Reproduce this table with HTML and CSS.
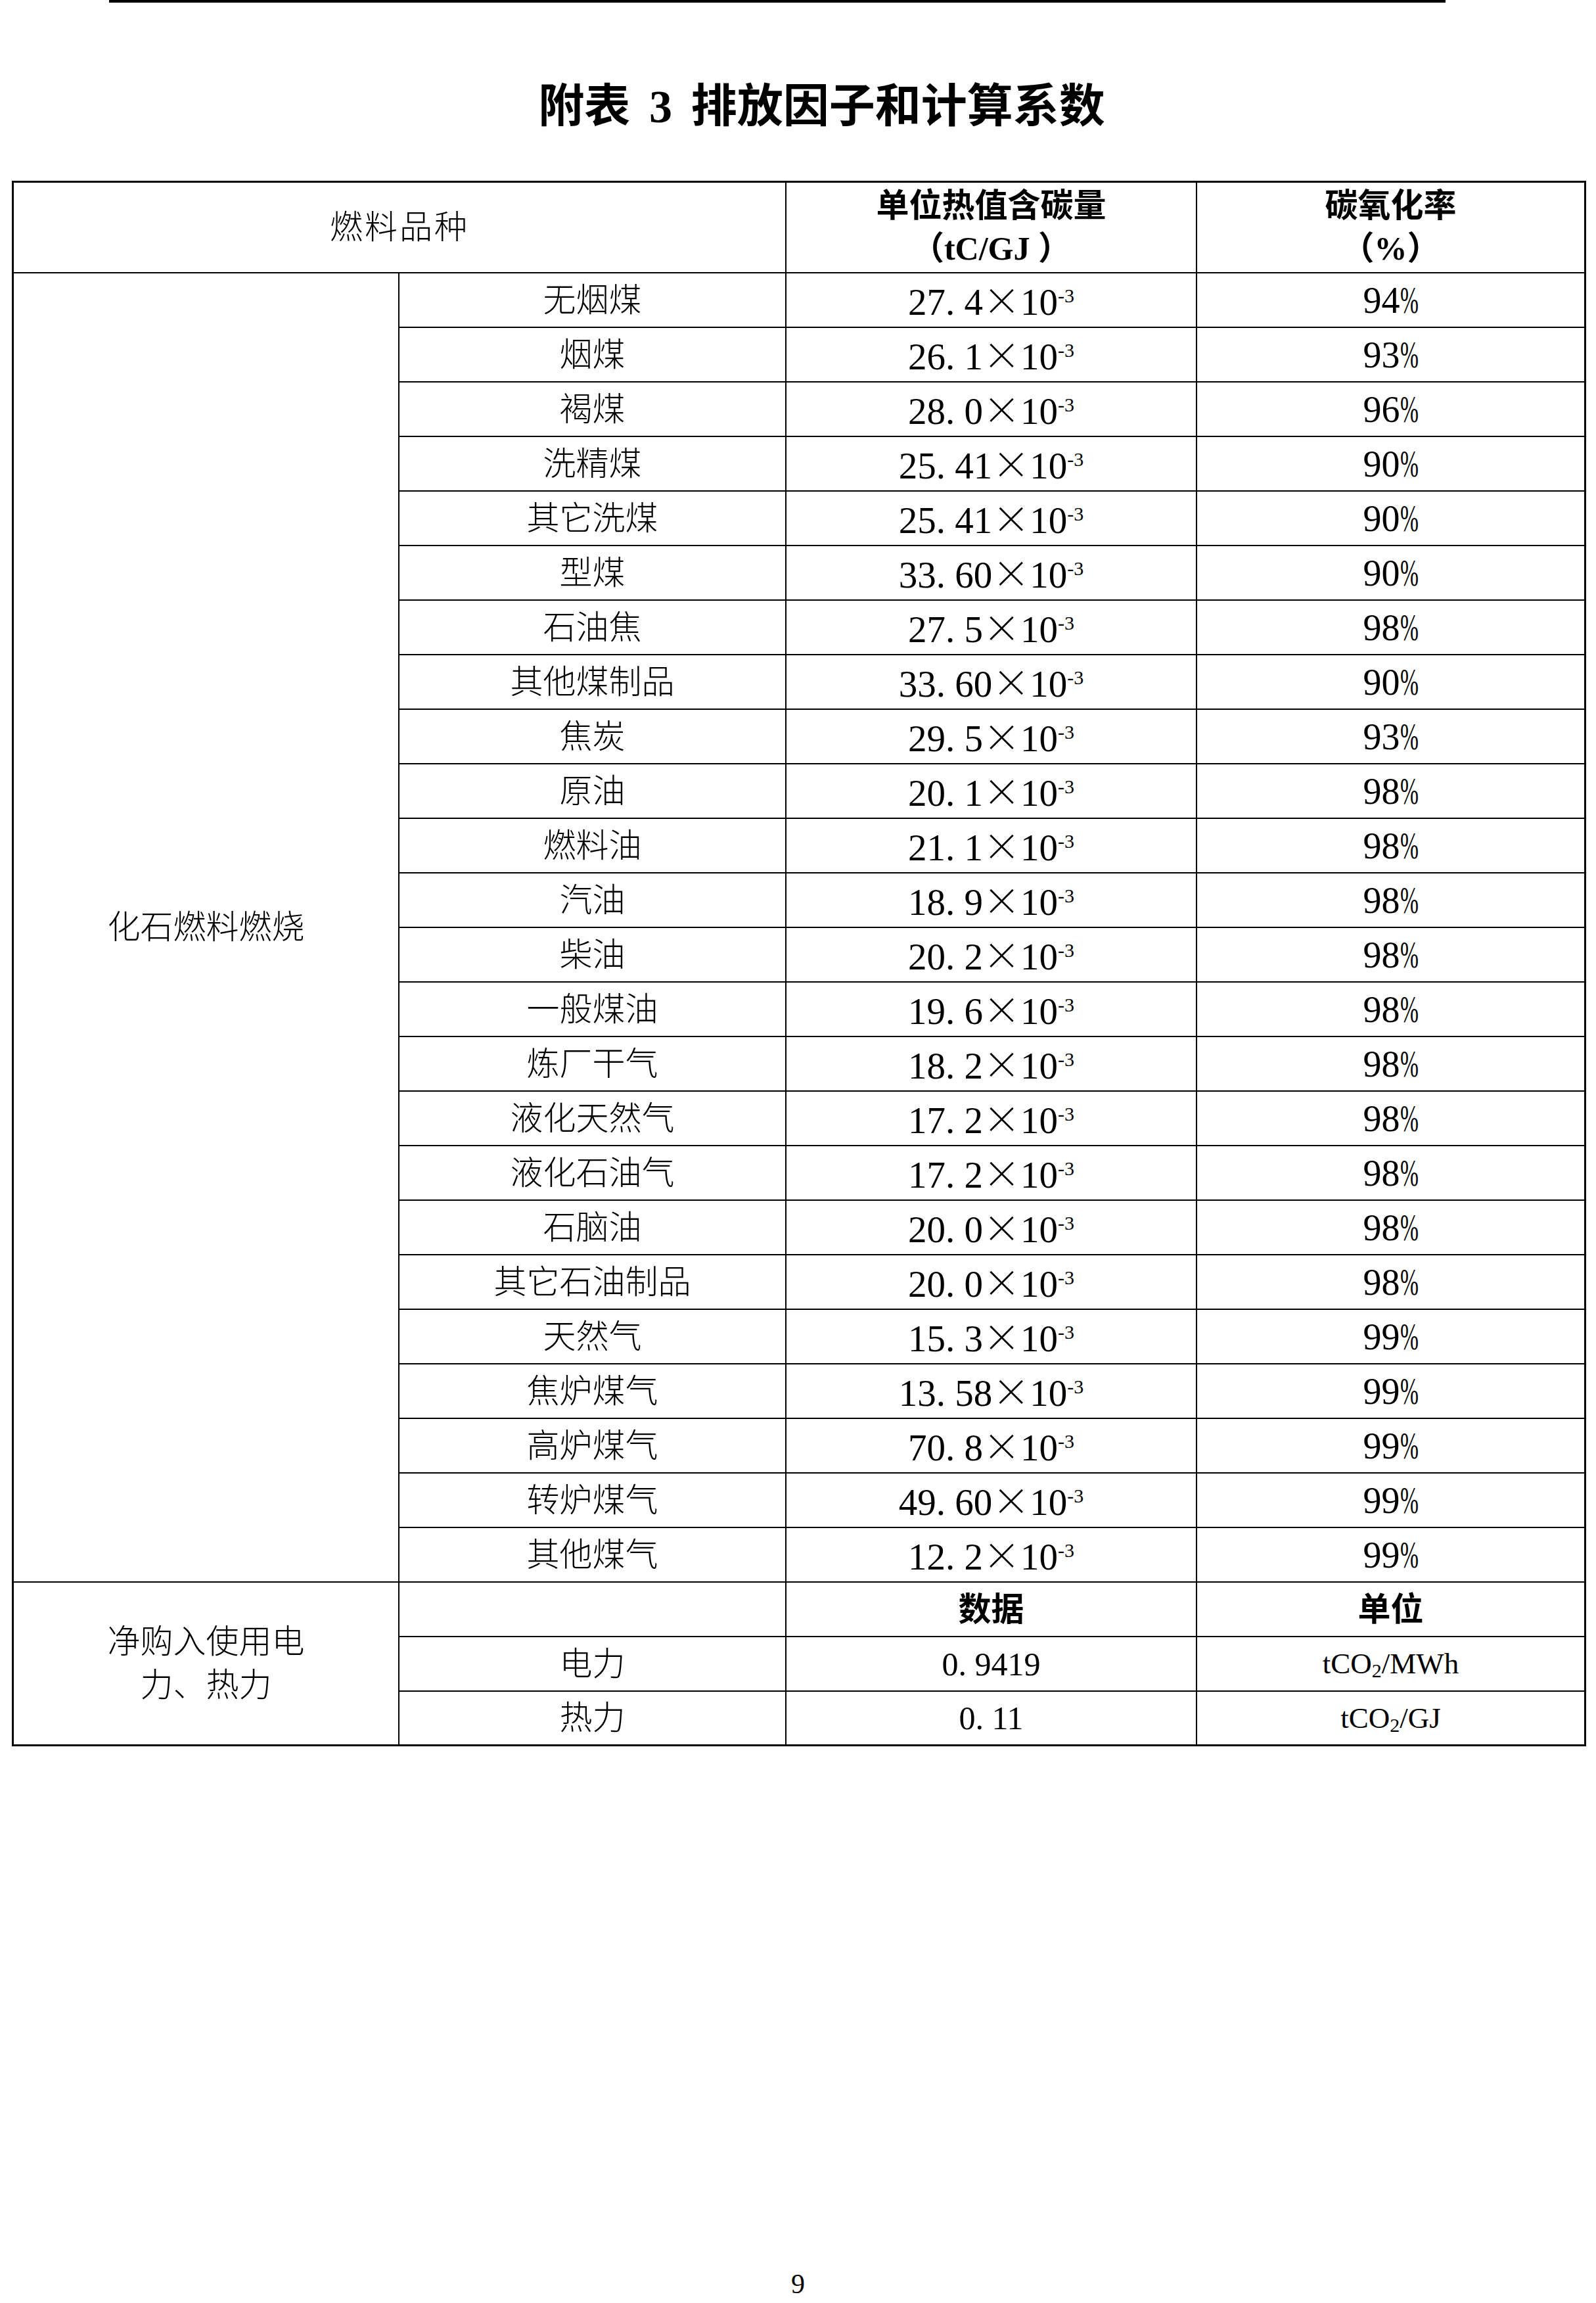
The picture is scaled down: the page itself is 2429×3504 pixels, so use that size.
FILE: index.html
```html
<!DOCTYPE html>
<html lang="zh-CN">
<head>
<meta charset="utf-8">
<title>附表 3 排放因子和计算系数</title>
<link rel="stylesheet" href="styles.css">
</head>
<body>
<div class="page">
  <div class="rule"></div>
  <h1 class="title">附表 3 排放因子和计算系数</h1>
  <div class="sheet">
    <div class="cell spaced span2">燃料品种</div>
    <div class="cell bold two"><span>单位热值含碳量<br>（tC/GJ ）</span></div>
    <div class="cell bold two"><span>碳氧化率<br>（%）</span></div>

    <div class="cell fossil">化石燃料燃烧</div>
    <div class="cell">无烟煤</div><div class="cell num"><span>27<span class="dot">.</span>4<span class="x">×</span>10<sup class="sup">-3</sup></span></div><div class="cell pct"><span>94<span class="pc">%</span></span></div>
    <div class="cell">烟煤</div><div class="cell num"><span>26<span class="dot">.</span>1<span class="x">×</span>10<sup class="sup">-3</sup></span></div><div class="cell pct"><span>93<span class="pc">%</span></span></div>
    <div class="cell">褐煤</div><div class="cell num"><span>28<span class="dot">.</span>0<span class="x">×</span>10<sup class="sup">-3</sup></span></div><div class="cell pct"><span>96<span class="pc">%</span></span></div>
    <div class="cell">洗精煤</div><div class="cell num"><span>25<span class="dot">.</span>41<span class="x">×</span>10<sup class="sup">-3</sup></span></div><div class="cell pct"><span>90<span class="pc">%</span></span></div>
    <div class="cell">其它洗煤</div><div class="cell num"><span>25<span class="dot">.</span>41<span class="x">×</span>10<sup class="sup">-3</sup></span></div><div class="cell pct"><span>90<span class="pc">%</span></span></div>
    <div class="cell">型煤</div><div class="cell num"><span>33<span class="dot">.</span>60<span class="x">×</span>10<sup class="sup">-3</sup></span></div><div class="cell pct"><span>90<span class="pc">%</span></span></div>
    <div class="cell">石油焦</div><div class="cell num"><span>27<span class="dot">.</span>5<span class="x">×</span>10<sup class="sup">-3</sup></span></div><div class="cell pct"><span>98<span class="pc">%</span></span></div>
    <div class="cell">其他煤制品</div><div class="cell num"><span>33<span class="dot">.</span>60<span class="x">×</span>10<sup class="sup">-3</sup></span></div><div class="cell pct"><span>90<span class="pc">%</span></span></div>
    <div class="cell">焦炭</div><div class="cell num"><span>29<span class="dot">.</span>5<span class="x">×</span>10<sup class="sup">-3</sup></span></div><div class="cell pct"><span>93<span class="pc">%</span></span></div>
    <div class="cell">原油</div><div class="cell num"><span>20<span class="dot">.</span>1<span class="x">×</span>10<sup class="sup">-3</sup></span></div><div class="cell pct"><span>98<span class="pc">%</span></span></div>
    <div class="cell">燃料油</div><div class="cell num"><span>21<span class="dot">.</span>1<span class="x">×</span>10<sup class="sup">-3</sup></span></div><div class="cell pct"><span>98<span class="pc">%</span></span></div>
    <div class="cell">汽油</div><div class="cell num"><span>18<span class="dot">.</span>9<span class="x">×</span>10<sup class="sup">-3</sup></span></div><div class="cell pct"><span>98<span class="pc">%</span></span></div>
    <div class="cell">柴油</div><div class="cell num"><span>20<span class="dot">.</span>2<span class="x">×</span>10<sup class="sup">-3</sup></span></div><div class="cell pct"><span>98<span class="pc">%</span></span></div>
    <div class="cell">一般煤油</div><div class="cell num"><span>19<span class="dot">.</span>6<span class="x">×</span>10<sup class="sup">-3</sup></span></div><div class="cell pct"><span>98<span class="pc">%</span></span></div>
    <div class="cell">炼厂干气</div><div class="cell num"><span>18<span class="dot">.</span>2<span class="x">×</span>10<sup class="sup">-3</sup></span></div><div class="cell pct"><span>98<span class="pc">%</span></span></div>
    <div class="cell">液化天然气</div><div class="cell num"><span>17<span class="dot">.</span>2<span class="x">×</span>10<sup class="sup">-3</sup></span></div><div class="cell pct"><span>98<span class="pc">%</span></span></div>
    <div class="cell">液化石油气</div><div class="cell num"><span>17<span class="dot">.</span>2<span class="x">×</span>10<sup class="sup">-3</sup></span></div><div class="cell pct"><span>98<span class="pc">%</span></span></div>
    <div class="cell">石脑油</div><div class="cell num"><span>20<span class="dot">.</span>0<span class="x">×</span>10<sup class="sup">-3</sup></span></div><div class="cell pct"><span>98<span class="pc">%</span></span></div>
    <div class="cell">其它石油制品</div><div class="cell num"><span>20<span class="dot">.</span>0<span class="x">×</span>10<sup class="sup">-3</sup></span></div><div class="cell pct"><span>98<span class="pc">%</span></span></div>
    <div class="cell">天然气</div><div class="cell num"><span>15<span class="dot">.</span>3<span class="x">×</span>10<sup class="sup">-3</sup></span></div><div class="cell pct"><span>99<span class="pc">%</span></span></div>
    <div class="cell">焦炉煤气</div><div class="cell num"><span>13<span class="dot">.</span>58<span class="x">×</span>10<sup class="sup">-3</sup></span></div><div class="cell pct"><span>99<span class="pc">%</span></span></div>
    <div class="cell">高炉煤气</div><div class="cell num"><span>70<span class="dot">.</span>8<span class="x">×</span>10<sup class="sup">-3</sup></span></div><div class="cell pct"><span>99<span class="pc">%</span></span></div>
    <div class="cell">转炉煤气</div><div class="cell num"><span>49<span class="dot">.</span>60<span class="x">×</span>10<sup class="sup">-3</sup></span></div><div class="cell pct"><span>99<span class="pc">%</span></span></div>
    <div class="cell">其他煤气</div><div class="cell num"><span>12<span class="dot">.</span>2<span class="x">×</span>10<sup class="sup">-3</sup></span></div><div class="cell pct"><span>99<span class="pc">%</span></span></div>

    <div class="cell power"><span>净购入使用电<br>力、热力</span></div>
    <div class="cell"></div><div class="cell bold">数据</div><div class="cell bold">单位</div>
    <div class="cell">电力</div><div class="cell val"><span>0<span class="dot">.</span>9419</span></div><div class="cell unit"><span>tCO<sub class="sub">2</sub>/MWh</span></div>
    <div class="cell">热力</div><div class="cell val"><span>0<span class="dot">.</span>11</span></div><div class="cell unit"><span>tCO<sub class="sub">2</sub>/GJ</span></div>
  </div>
  <div class="folio">9</div>
</div>
</body>
</html>
```

FILE: styles.css
```css
body {
  margin: 0;
  background: #fff;
  color: #000;
  font-family: "Liberation Serif", "Noto Sans CJK SC", serif;
}

.page {
  width: 2429px;
}

.rule {
  margin-left: 166px;
  width: 2034px;
  height: 4px;
  background: #000;
}

.title {
  margin: 124px 0 0;
  padding-left: 72px;
  text-align: center;
  font-size: 70px;
  line-height: 70px;
  font-weight: 700;
  word-spacing: 0.16em;
}

.sheet {
  margin: 77px 0 0 18px;
  width: 2390px;
  display: grid;
  grid-template-columns: 585px 587px 623px 589px;
  grid-template-rows: 136px repeat(24, 81px) 81px 81px 80px;
  gap: 2px;
  padding: 3px;
  background: #000;
}

.cell {
  background: #fff;
  display: flex;
  align-items: center;
  justify-content: center;
  text-align: center;
  font-size: 50px;
  line-height: 50px;
  font-weight: 300;
}

.span2 {
  grid-column: span 2;
}

.spaced {
  letter-spacing: 3px;
}

.bold {
  font-weight: 700;
}

.two {
  line-height: 65px;
}

.fossil {
  grid-column: 1;
  grid-row: 2 / span 24;
}

.power {
  grid-column: 1;
  grid-row: 26 / span 3;
  line-height: 66px;
}

.num {
  font-size: 57px;
  line-height: 57px;
  font-weight: 400;
}

.dot {
  padding-right: 0.25em;
}

.x {
  display: inline-block;
  width: 1em;
  text-align: center;
  font-family: "Noto Sans CJK SC", sans-serif;
  font-weight: 300;
}

.sup {
  font-size: 30px;
  line-height: 1;
  vertical-align: 19px;
}

.pct {
  font-size: 56px;
  line-height: 56px;
  font-weight: 400;
}

.pc {
  display: inline-block;
  width: 0.5em;
  transform: scaleX(0.6);
  transform-origin: left center;
}

.val {
  font-size: 50px;
  font-weight: 400;
}

.unit {
  font-size: 45px;
  font-weight: 400;
}

.sub {
  font-size: 30px;
  line-height: 1;
  vertical-align: -6px;
}

.folio {
  margin-top: 797px;
  text-align: center;
  font-size: 42px;
  line-height: 42px;
}
```
